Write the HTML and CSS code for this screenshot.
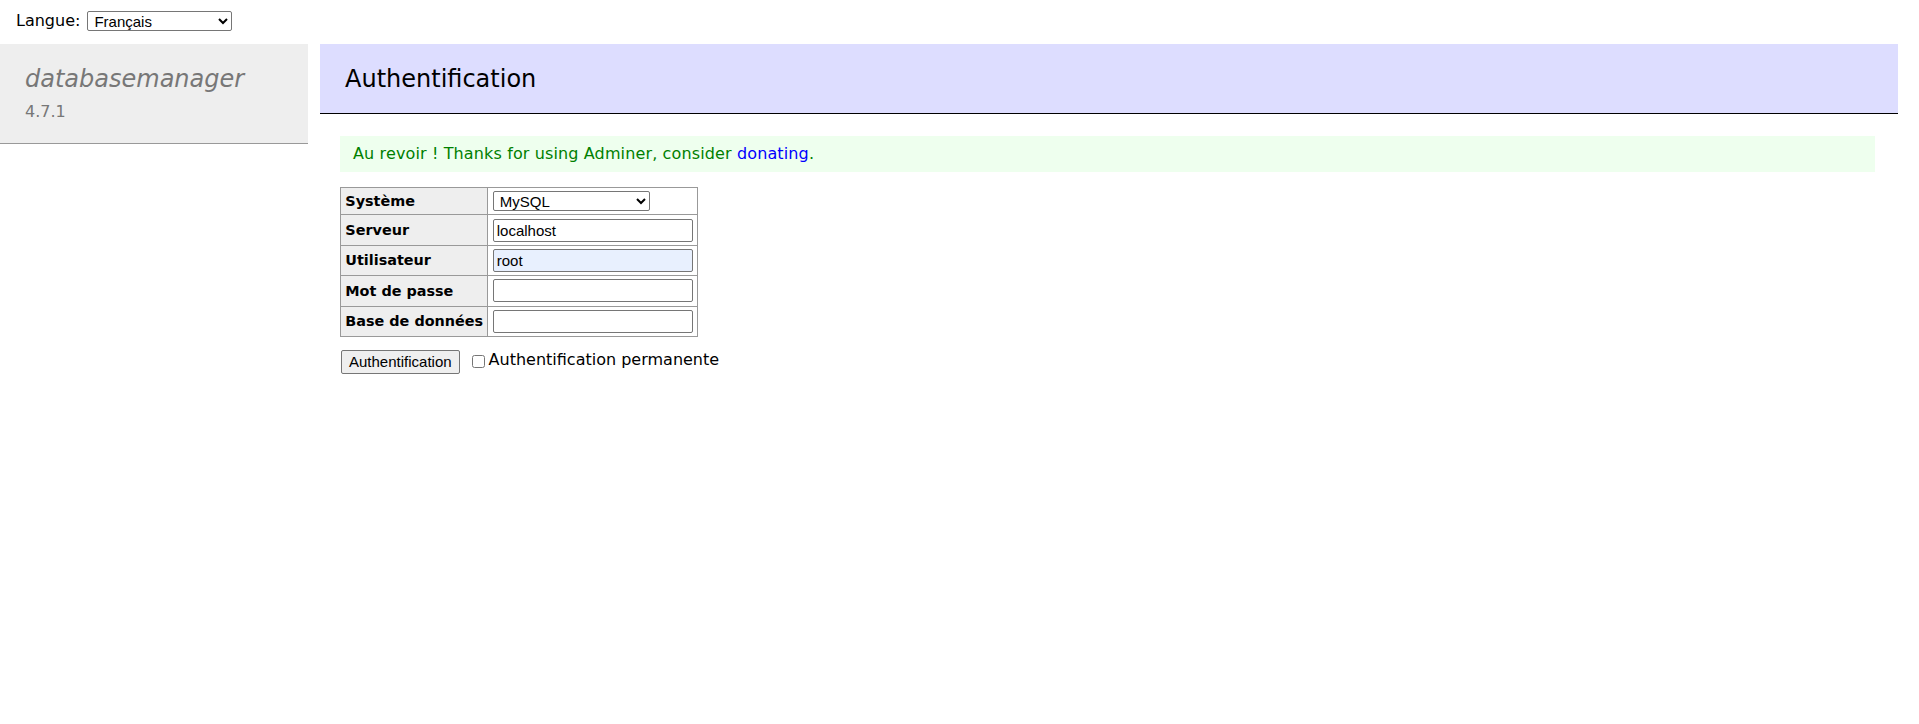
FILE: index.html
```html
<!DOCTYPE html>
<html lang="fr">
<head>
  <meta charset="UTF-8">
  <title>Authentification - databasemanager</title>
  <link rel="stylesheet" href="styles.css">
</head>
<body>
  <form class="lang">
    <span>Langue:</span>
    <select class="lang-select">
      <option>Français</option>
    </select>
  </form>
  <div class="layout">
    <div class="menu">
      <h1><a href="#" class="brand">databasemanager</a><br><span class="version">4.7.1</span></h1>
    </div>
    <div class="content">
      <h2>Authentification</h2>
      <div class="message">Au revoir ! Thanks for using Adminer, consider <a href="#">donating</a>.</div>
      <form class="login">
        <table class="login-table" cellspacing="0">
          <tr>
            <th>Système</th>
            <td>
              <select class="driver">
                <option>MySQL</option>
              </select>
            </td>
          </tr>
          <tr>
            <th>Serveur</th>
            <td><input type="text" class="field" value="localhost"></td>
          </tr>
          <tr>
            <th>Utilisateur</th>
            <td><input type="text" class="field autofill" value="root"></td>
          </tr>
          <tr>
            <th>Mot de passe</th>
            <td><input type="password" class="field"></td>
          </tr>
          <tr>
            <th>Base de données</th>
            <td><input type="text" class="field"></td>
          </tr>
        </table>
        <div class="actions">
          <button type="button" class="submit">Authentification</button>
          <label class="remember"><input type="checkbox" class="check">Authentification permanente</label>
        </div>
      </form>
    </div>
  </div>
</body>
</html>
```

FILE: styles.css
```css
/* Page de connexion */
body {
  margin: 0;
  font-family: Verdana, "DejaVu Sans", sans-serif;
  font-size: 16px;
  line-height: 1.25;
  color: #000;
  background: #fff;
}
a {
  color: #00f;
  text-decoration: none;
}
select, input, button {
  font-family: Arial, "Liberation Sans", sans-serif;
  font-size: 15px;
  color: #000;
  box-sizing: border-box;
}

.lang {
  display: flex;
  align-items: flex-start;
  gap: 7px;
  height: 44px;
  box-sizing: border-box;
  padding: 11px 16px 0;
  margin: 0;
}
.lang-select {
  width: 145px;
  height: 20px;
  padding: 0 2px;
  border: 1px solid #767676;
  border-radius: 2px;
  background: #fff;
}

.layout {
  display: flex;
  align-items: flex-start;
}
.menu {
  width: 308px;
  flex-shrink: 0;
}
h1 {
  margin: 0;
  padding: 20px 25px 19px;
  font-size: 24px;
  line-height: 30px;
  font-weight: normal;
  color: #777;
  background: #eee;
  border-bottom: 1px solid #999;
}
.brand {
  color: #777;
  font-style: italic;
}
.version {
  font-size: 16px;
  line-height: 16px;
  color: #777;
}

.content {
  flex: 1;
  margin: 0 21px 0 12px;
}
h2 {
  margin: 0;
  padding: 20px 25px 19px;
  font-size: 24px;
  line-height: 30px;
  font-weight: normal;
  background: #ddf;
  border-bottom: 1px solid #000;
}
.message {
  margin: 22px 23px 0 20px;
  padding: 8px 13px;
  color: green;
  background: #efe;
  letter-spacing: 0.13px;
}

.login-table {
  margin: 15px 0 0 20px;
  border-collapse: separate;
  border-top: 1px solid #999;
  border-left: 1px solid #999;
  font-size: 14.4px;
}
.login-table th, .login-table td {
  padding: 3.2px 4.3px;
  border-right: 1px solid #999;
  border-bottom: 1px solid #999;
  line-height: 18px;
}
.login-table th {
  text-align: left;
  background: #eee;
}
.driver {
  display: block;
  width: 157px;
  height: 20px;
  padding: 0 2px;
  border: 1px solid #767676;
  border-radius: 2px;
  background: #fff;
}
.field {
  display: block;
  width: 200px;
  height: 23px;
  padding: 1px 3px;
  border: 1px solid #767676;
  border-radius: 2px;
  background: #fff;
}
.field.autofill {
  background: #e8f0fe;
}

.actions {
  display: flex;
  align-items: center;
  margin: 13px 0 0 21px;
}
.submit {
  height: 24px;
  padding: 0 7px;
  border: 1px solid #767676;
  border-radius: 2px;
  background: #efefef;
}
.remember {
  display: flex;
  align-items: center;
  margin-left: 12px;
  margin-top: -3px;
}
.check {
  width: 13px;
  height: 13px;
  margin: 3px 4px 0 0;
}
```
